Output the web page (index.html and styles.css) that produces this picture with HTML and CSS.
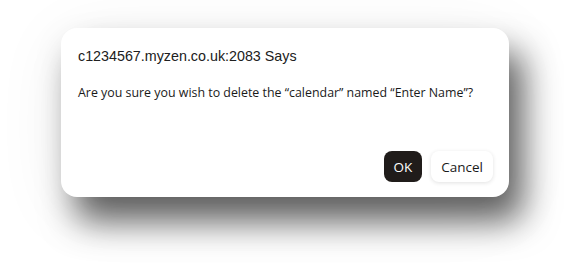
FILE: index.html
```html
<!DOCTYPE html>
<html lang="en">
<head>
    <meta charset="UTF-8">
    <title>Confirm</title>
    <link rel="stylesheet" href="styles.css">
</head>
<body>
    <div class="dialog">
        <div class="dialog-title">c1234567.myzen.co.uk:2083 Says</div>
        <div class="dialog-message">Are you sure you wish to delete the “calendar” named “Enter Name”?</div>
        <div class="dialog-buttons">
            <button class="btn btn-ok">OK</button>
            <button class="btn btn-cancel">Cancel</button>
        </div>
    </div>
</body>
</html>
```

FILE: styles.css
```css
* {
    margin: 0;
    padding: 0;
    box-sizing: border-box;
}

html, body {
    height: 100%;
}

body {
    background: #ffffff;
    padding: 28px 0 0 61px;
    font-family: "Open Sans", "Noto Sans", sans-serif;
    overflow: hidden;
}

.dialog {
    width: 448px;
    height: 169px;
    background: #ffffff;
    border-radius: 16px;
    padding: 18px 16px 15px 17px;
    display: flex;
    flex-direction: column;
    box-shadow: 14px 24px 34px rgba(0, 0, 0, 0.62), 0 12px 70px rgba(0, 0, 0, 0.07);
}

.dialog-title {
    font-family: "Liberation Sans", Arial, sans-serif;
    font-size: 14.3px;
    color: #202020;
    line-height: 20px;
}

.dialog-message {
    margin-top: 18px;
    font-size: 12.4px;
    color: #1a1a1a;
    line-height: 18px;
}

.dialog-buttons {
    margin-top: auto;
    display: flex;
    justify-content: flex-end;
    gap: 9px;
}

.btn {
    font-family: "Open Sans", "Noto Sans", sans-serif;
    font-size: 13.5px;
    height: 31px;
    border: none;
    border-radius: 8px;
    padding: 0 8px;
}

.btn-ok {
    background: #201c1a;
    color: #ffffff;
    width: 38px;
}

.btn-cancel {
    background: #ffffff;
    color: #1a1a1a;
    width: 62px;
    box-shadow: 0 1px 4px rgba(0, 0, 0, 0.12);
}
```
